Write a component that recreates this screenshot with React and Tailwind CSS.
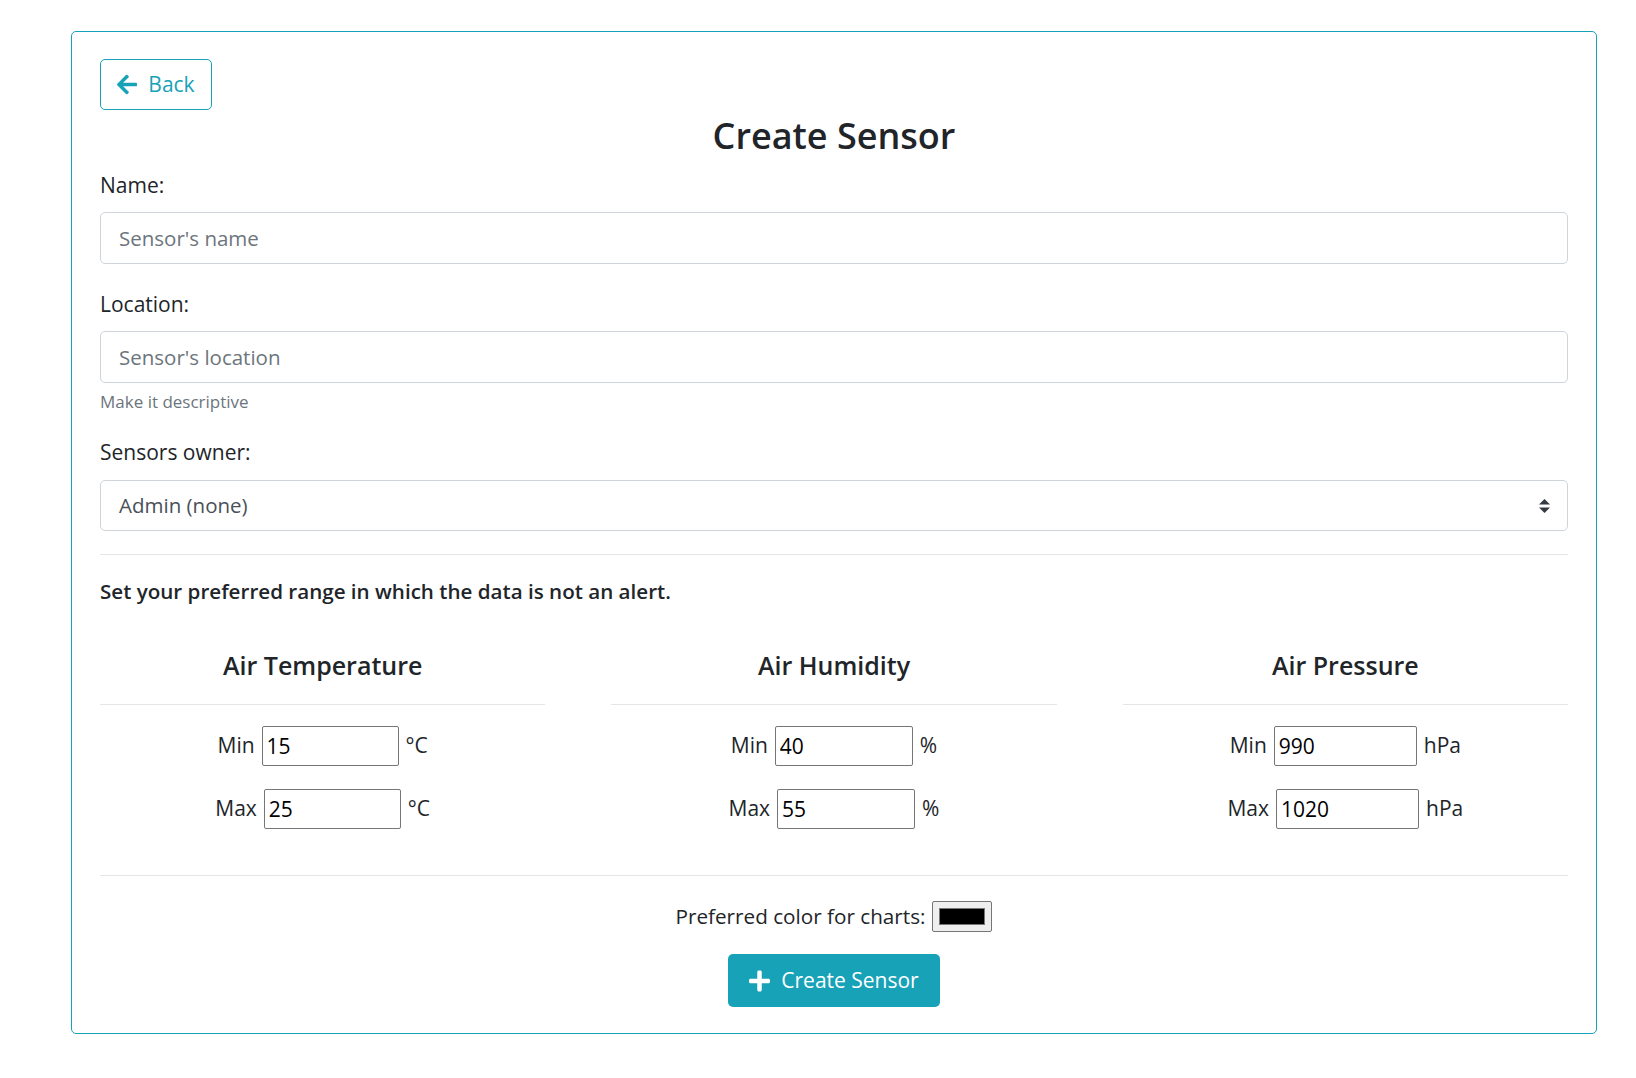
import React from "react";

const ArrowLeft = () => (
  <svg viewBox="0 0 448 512" className="w-[20px] h-[23px] fill-current">
    <path d="M257.5 445.1l-22.2 22.2c-9.4 9.4-24.6 9.4-33.9 0L7 273c-9.4-9.4-9.4-24.6 0-33.9L201.4 44.7c9.4-9.4 24.6-9.4 33.9 0l22.2 22.2c9.5 9.5 9.3 25-.4 34.3L136.6 216H424c13.3 0 24 10.7 24 24v32c0 13.3-10.7 24-24 24H136.6l120.5 114.8c9.8 9.3 10 24.8.4 34.3z" />
  </svg>
);

const Plus = () => (
  <svg viewBox="0 0 448 512" className="w-[21px] h-[24px] fill-current">
    <path d="M416 208H272V64c0-17.670-14.330-32-32-32h-32c-17.670 0-32 14.330-32 32v144H32c-17.670 0-32 14.330-32 32v32c0 17.670 14.330 32 32 32h144v144c0 17.670 14.330 32 32 32h32c17.670 0 32-14.330 32-32V304h144c17.670 0 32-14.330 32-32v-32c0-17.670-14.330-32-32-32z" />
  </svg>
);

const Caret = () => (
  <svg viewBox="0 0 11 14" className="w-[11px] h-[14px] fill-[#343a40]">
    <path d="M5.5 0 L11 5.5 H0 Z" />
    <path d="M5.5 14 L11 8.5 H0 Z" />
  </svg>
);

function RangeRow({ label, value, unit, inputClass }) {
  return (
    <div className="flex items-center justify-center gap-[7px] h-[40px]">
      <span className="text-[21px] text-[#212529]">{label}</span>
      <input
        readOnly
        value={value}
        className={`${inputClass} h-[40px] border border-[#767676] rounded-[2px] px-[4px] text-[21px] text-black outline-none`}
      />
      <span className="text-[21px] text-[#212529]">{unit}</span>
    </div>
  );
}

function RangeCol({ title, min, max, unit, inputClass }) {
  return (
    <div className="flex flex-col">
      <h4 className="text-[25px] font-semibold leading-[33px] text-center text-[#212529]">{title}</h4>
      <div className="mt-[22px] border-t border-[#e6e6e6]" />
      <div className="mt-[21px]">
        <RangeRow label="Min" value={min} unit={unit} inputClass={inputClass} />
      </div>
      <div className="mt-[23px]">
        <RangeRow label="Max" value={max} unit={unit} inputClass={inputClass} />
      </div>
    </div>
  );
}

export default function App() {
  return (
    <div className="bg-white min-h-screen font-['Open_Sans',sans-serif] text-[#212529] pt-[31px] pl-[71px] pr-[39px]">
      <div className="border border-[#17a2b8] rounded-[5px] px-[28px] pt-[27px] pb-[26px] flex flex-col">
        <div>
          <button className="h-[51px] w-[112px] border border-[#17a2b8] rounded-[5px] text-[#17a2b8] flex items-center justify-center gap-[11px] text-[21px]">
            <ArrowLeft />
            <span>Back</span>
          </button>
        </div>
        <h2 className="mt-[3px] text-[36px] font-semibold leading-[46px] text-center">Create Sensor</h2>

        <label className="mt-[11px] text-[21px] leading-[31px]">Name:</label>
        <div className="mt-[11px] h-[52px] border border-[#ced4da] rounded-[5px] flex items-center px-[18px] text-[20.5px] text-[#6c757d]">
          Sensor's name
        </div>

        <label className="mt-[25px] text-[21px] leading-[31px]">Location:</label>
        <div className="mt-[11px] h-[52px] border border-[#ced4da] rounded-[5px] flex items-center px-[18px] text-[20.5px] text-[#6c757d]">
          Sensor's location
        </div>
        <div className="mt-[6px] text-[17px] leading-[25px] text-[#6c757d]">Make it descriptive</div>

        <label className="mt-[23px] text-[21px] leading-[31px]">Sensors owner:</label>
        <div className="mt-[12px] h-[51px] border border-[#ced4da] rounded-[5px] flex items-center justify-between pl-[18px] pr-[17px] text-[20.5px] text-[#495057]">
          <span>Admin (none)</span>
          <Caret />
        </div>

        <div className="mt-[23px] border-t border-[#e6e6e6]" />

        <p className="mt-[21px] text-[20.6px] font-semibold leading-[30px]">
          Set your preferred range in which the data is not an alert.
        </p>

        <div className="mt-[43px] grid grid-cols-3 gap-x-[66px]">
          <RangeCol title="Air Temperature" min="15" max="25" unit="°C" inputClass="w-[137px]" />
          <RangeCol title="Air Humidity" min="40" max="55" unit="%" inputClass="w-[138px]" />
          <RangeCol title="Air Pressure" min="990" max="1020" unit="hPa" inputClass="w-[143px]" />
        </div>

        <div className="mt-[46px] border-t border-[#e6e6e6]" />

        <div className="mt-[25px] flex items-center justify-center gap-[7px]">
          <span className="text-[20.7px]">Preferred color for charts:</span>
          <div className="w-[60px] h-[31px] bg-[#efefef] border border-[#767676] rounded-[2px] flex items-center justify-center">
            <div className="w-[46px] h-[17px] bg-black border border-[#777]" />
          </div>
        </div>

        <div className="mt-[22px] flex justify-center">
          <button className="h-[53px] w-[212px] bg-[#17a2b8] rounded-[5px] text-white flex items-center justify-center gap-[11px] text-[21px]">
            <Plus />
            <span>Create Sensor</span>
          </button>
        </div>
      </div>
    </div>
  );
}
